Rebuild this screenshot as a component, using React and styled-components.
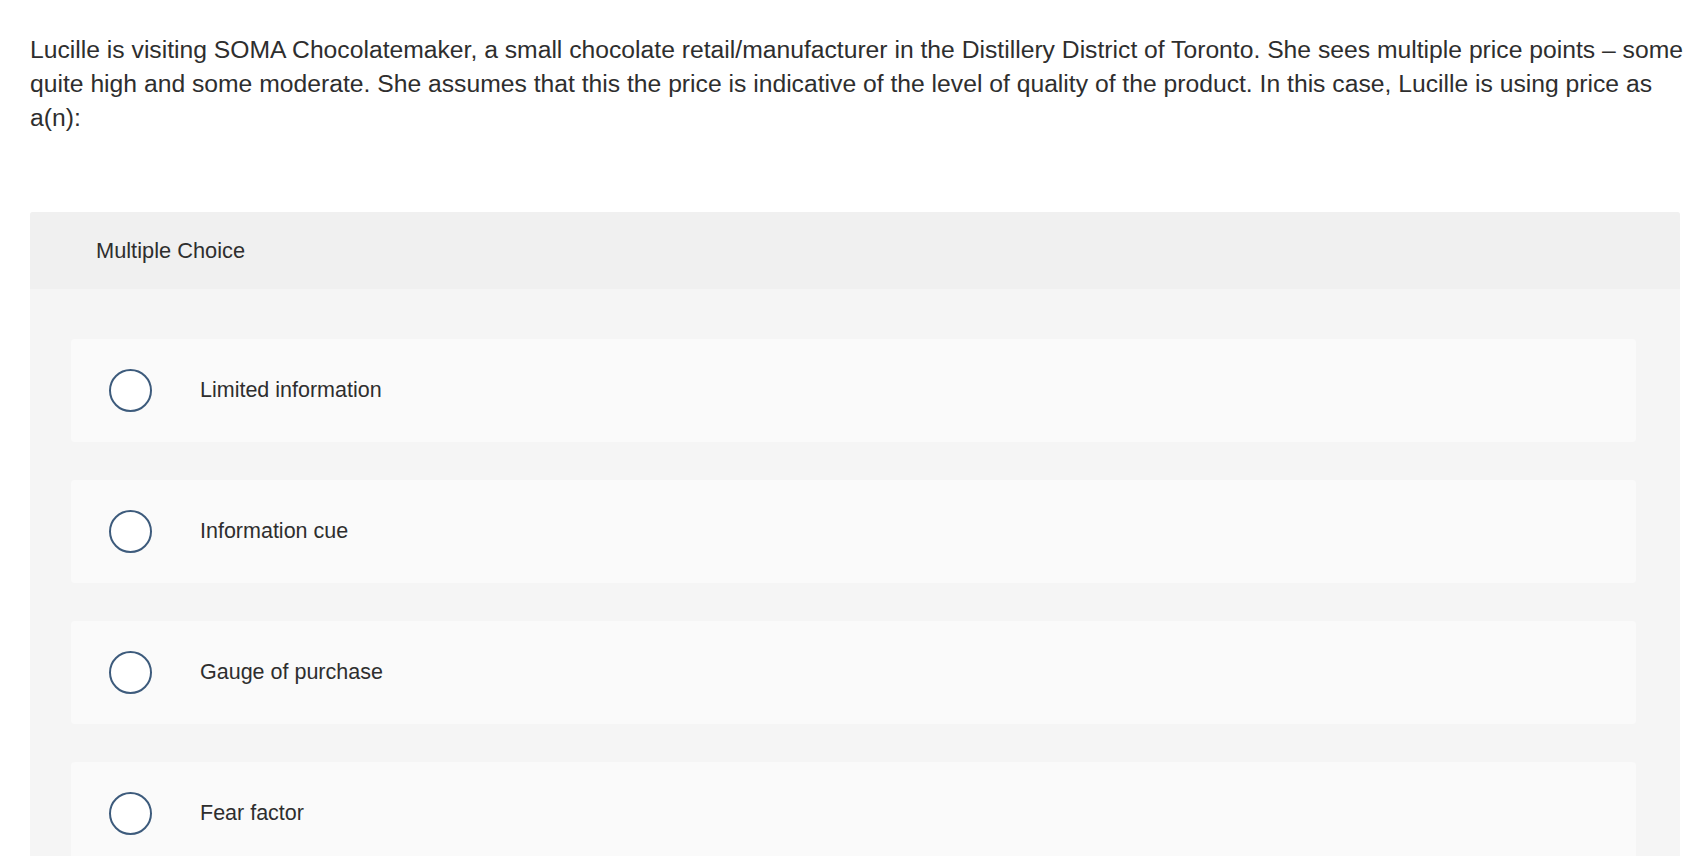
import styled, { createGlobalStyle } from 'styled-components'

const GlobalStyle = createGlobalStyle`
    html, body {
        margin: 0;
        padding: 0;
        background: #ffffff;
    }
    body {
        font-family: "Liberation Sans", Arial, sans-serif;
        color: #2e2e2e;
    }
`

const Page = styled.div`
    padding: 33px 20px 0 30px;
    width: 1650px;
`

const Question = styled.p`
    margin: 0 -20px 0 0;
    font-size: 24.7px;
    line-height: 34px;
    color: #2e2e2e;
`

const Panel = styled.section`
    margin-top: 77px;
    background: #f5f5f5;
    border-radius: 3px;
    overflow: hidden;
`

const PanelHeader = styled.div`
    height: 77px;
    background: #f0f0f0;
    display: flex;
    align-items: center;
    padding-left: 66px;
    font-size: 21.8px;
    color: #2e2e2e;
`

const OptionList = styled.div`
    display: flex;
    flex-direction: column;
    gap: 38px;
    padding: 50px 44px 40px 41px;
`

const OptionCard = styled.label`
    height: 103px;
    background: #fafafa;
    border-radius: 4px;
    display: flex;
    align-items: center;
    padding-left: 38px;
    gap: 48px;
    cursor: pointer;
`

const Radio = styled.span`
    width: 39px;
    height: 39px;
    border: 2px solid #3d5b7c;
    border-radius: 50%;
    background: #ffffff;
    flex-shrink: 0;
`

const OptionText = styled.span`
    font-size: 21.5px;
    color: #2e2e2e;
`

const options = [
    'Limited information',
    'Information cue',
    'Gauge of purchase',
    'Fear factor',
]

export default function App() {
    return (
        <>
            <GlobalStyle />
            <Page>
                <Question>
                    Lucille is visiting SOMA Chocolatemaker, a small chocolate retail/manufacturer in the Distillery District of Toronto. She sees multiple price points – some quite high and some moderate. She assumes that this the price is indicative of the level of quality of the product. In this case, Lucille is using price as a(n):
                </Question>
                <Panel>
                    <PanelHeader>Multiple Choice</PanelHeader>
                    <OptionList>
                        {options.map(option =>
                            <OptionCard key={option}>
                                <Radio />
                                <OptionText>{option}</OptionText>
                            </OptionCard>
                        )}
                    </OptionList>
                </Panel>
            </Page>
        </>
    )
}
